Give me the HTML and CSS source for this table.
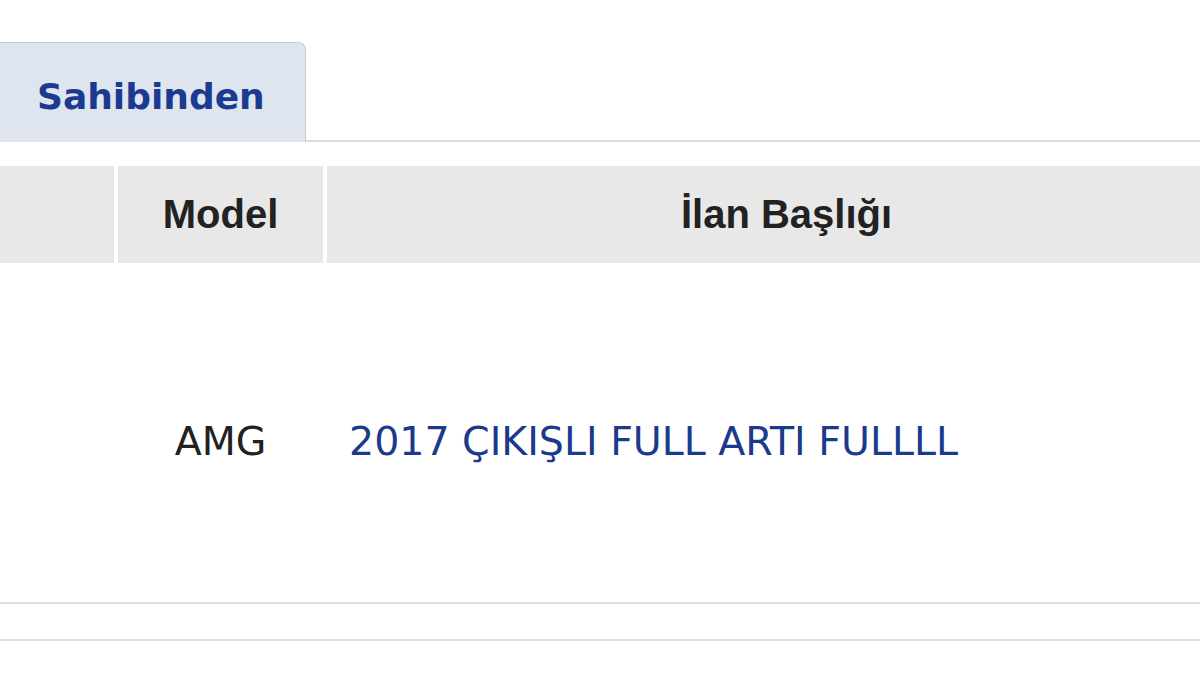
FILE: index.html
```html
<!DOCTYPE html>
<html lang="tr">
<head>
<meta charset="utf-8">
<link rel="stylesheet" href="styles.css">
</head>
<body>
<div class="page">
  <div class="tabs">
    <div class="tab">Sahibinden</div>
  </div>
  <div class="table">
    <div class="head">
      <div class="cell c1"></div>
      <div class="cell c2">Model</div>
      <div class="cell c3">İlan Başlığı</div>
    </div>
    <div class="row">
      <div class="cell c1"></div>
      <div class="cell c2 val">AMG</div>
      <div class="cell c3 val"><a class="link" href="#">2017 ÇIKIŞLI FULL ARTI FULLLL</a></div>
    </div>
    <div class="row2"></div>
  </div>
</div>
</body>
</html>
```
FILE: styles.css
```css
html, body { margin: 0; padding: 0; background: #fff; }
body { width: 1200px; height: 675px; overflow: hidden; }
.page { padding-top: 42px; }
.tabs {
  display: flex;
  border-bottom: 2px solid #dcdcdc;
  height: 98px;
}
.tab {
  width: 306px;
  box-sizing: border-box;
  height: 100px;
  background: #dfe5ee;
  border: 1px solid #c9ced6;
  border-left: none;
  border-bottom: none;
  border-radius: 0 8px 0 0;
  font-family: "DejaVu Sans", sans-serif;
  font-weight: bold;
  font-size: 36px;
  color: #1b3b90;
  padding-left: 37px;
  padding-top: 34px;
  line-height: 40px;
}
.table { margin-top: 24px; }
.head {
  display: flex;
  height: 97px;
  gap: 4px;
}
.head .cell {
  background: #e8e8e8;
  font-family: "Liberation Sans", Arial, sans-serif;
  font-weight: bold;
  font-size: 40px;
  color: #222;
  display: flex;
  align-items: center;
  justify-content: center;
}
.c1 { width: 114px; }
.c2 { width: 205px; }
.c3 { flex: 1; padding-left: 46px; }
.row {
  display: flex;
  gap: 4px;
  height: 339px;
  border-bottom: 2px solid #dedede;
}
.row .cell {
  display: flex;
  align-items: center;
  font-family: "DejaVu Sans", sans-serif;
  font-size: 39.5px;
  color: #222;
  padding-top: 17px;
  box-sizing: border-box;
}
.row .c2 { justify-content: center; }
.row .c3 { padding-left: 22px; }
.link { color: #1a3a8c; text-decoration: none; }
.row2 {
  height: 35px;
  border-bottom: 2px solid #dedede;
}
```
